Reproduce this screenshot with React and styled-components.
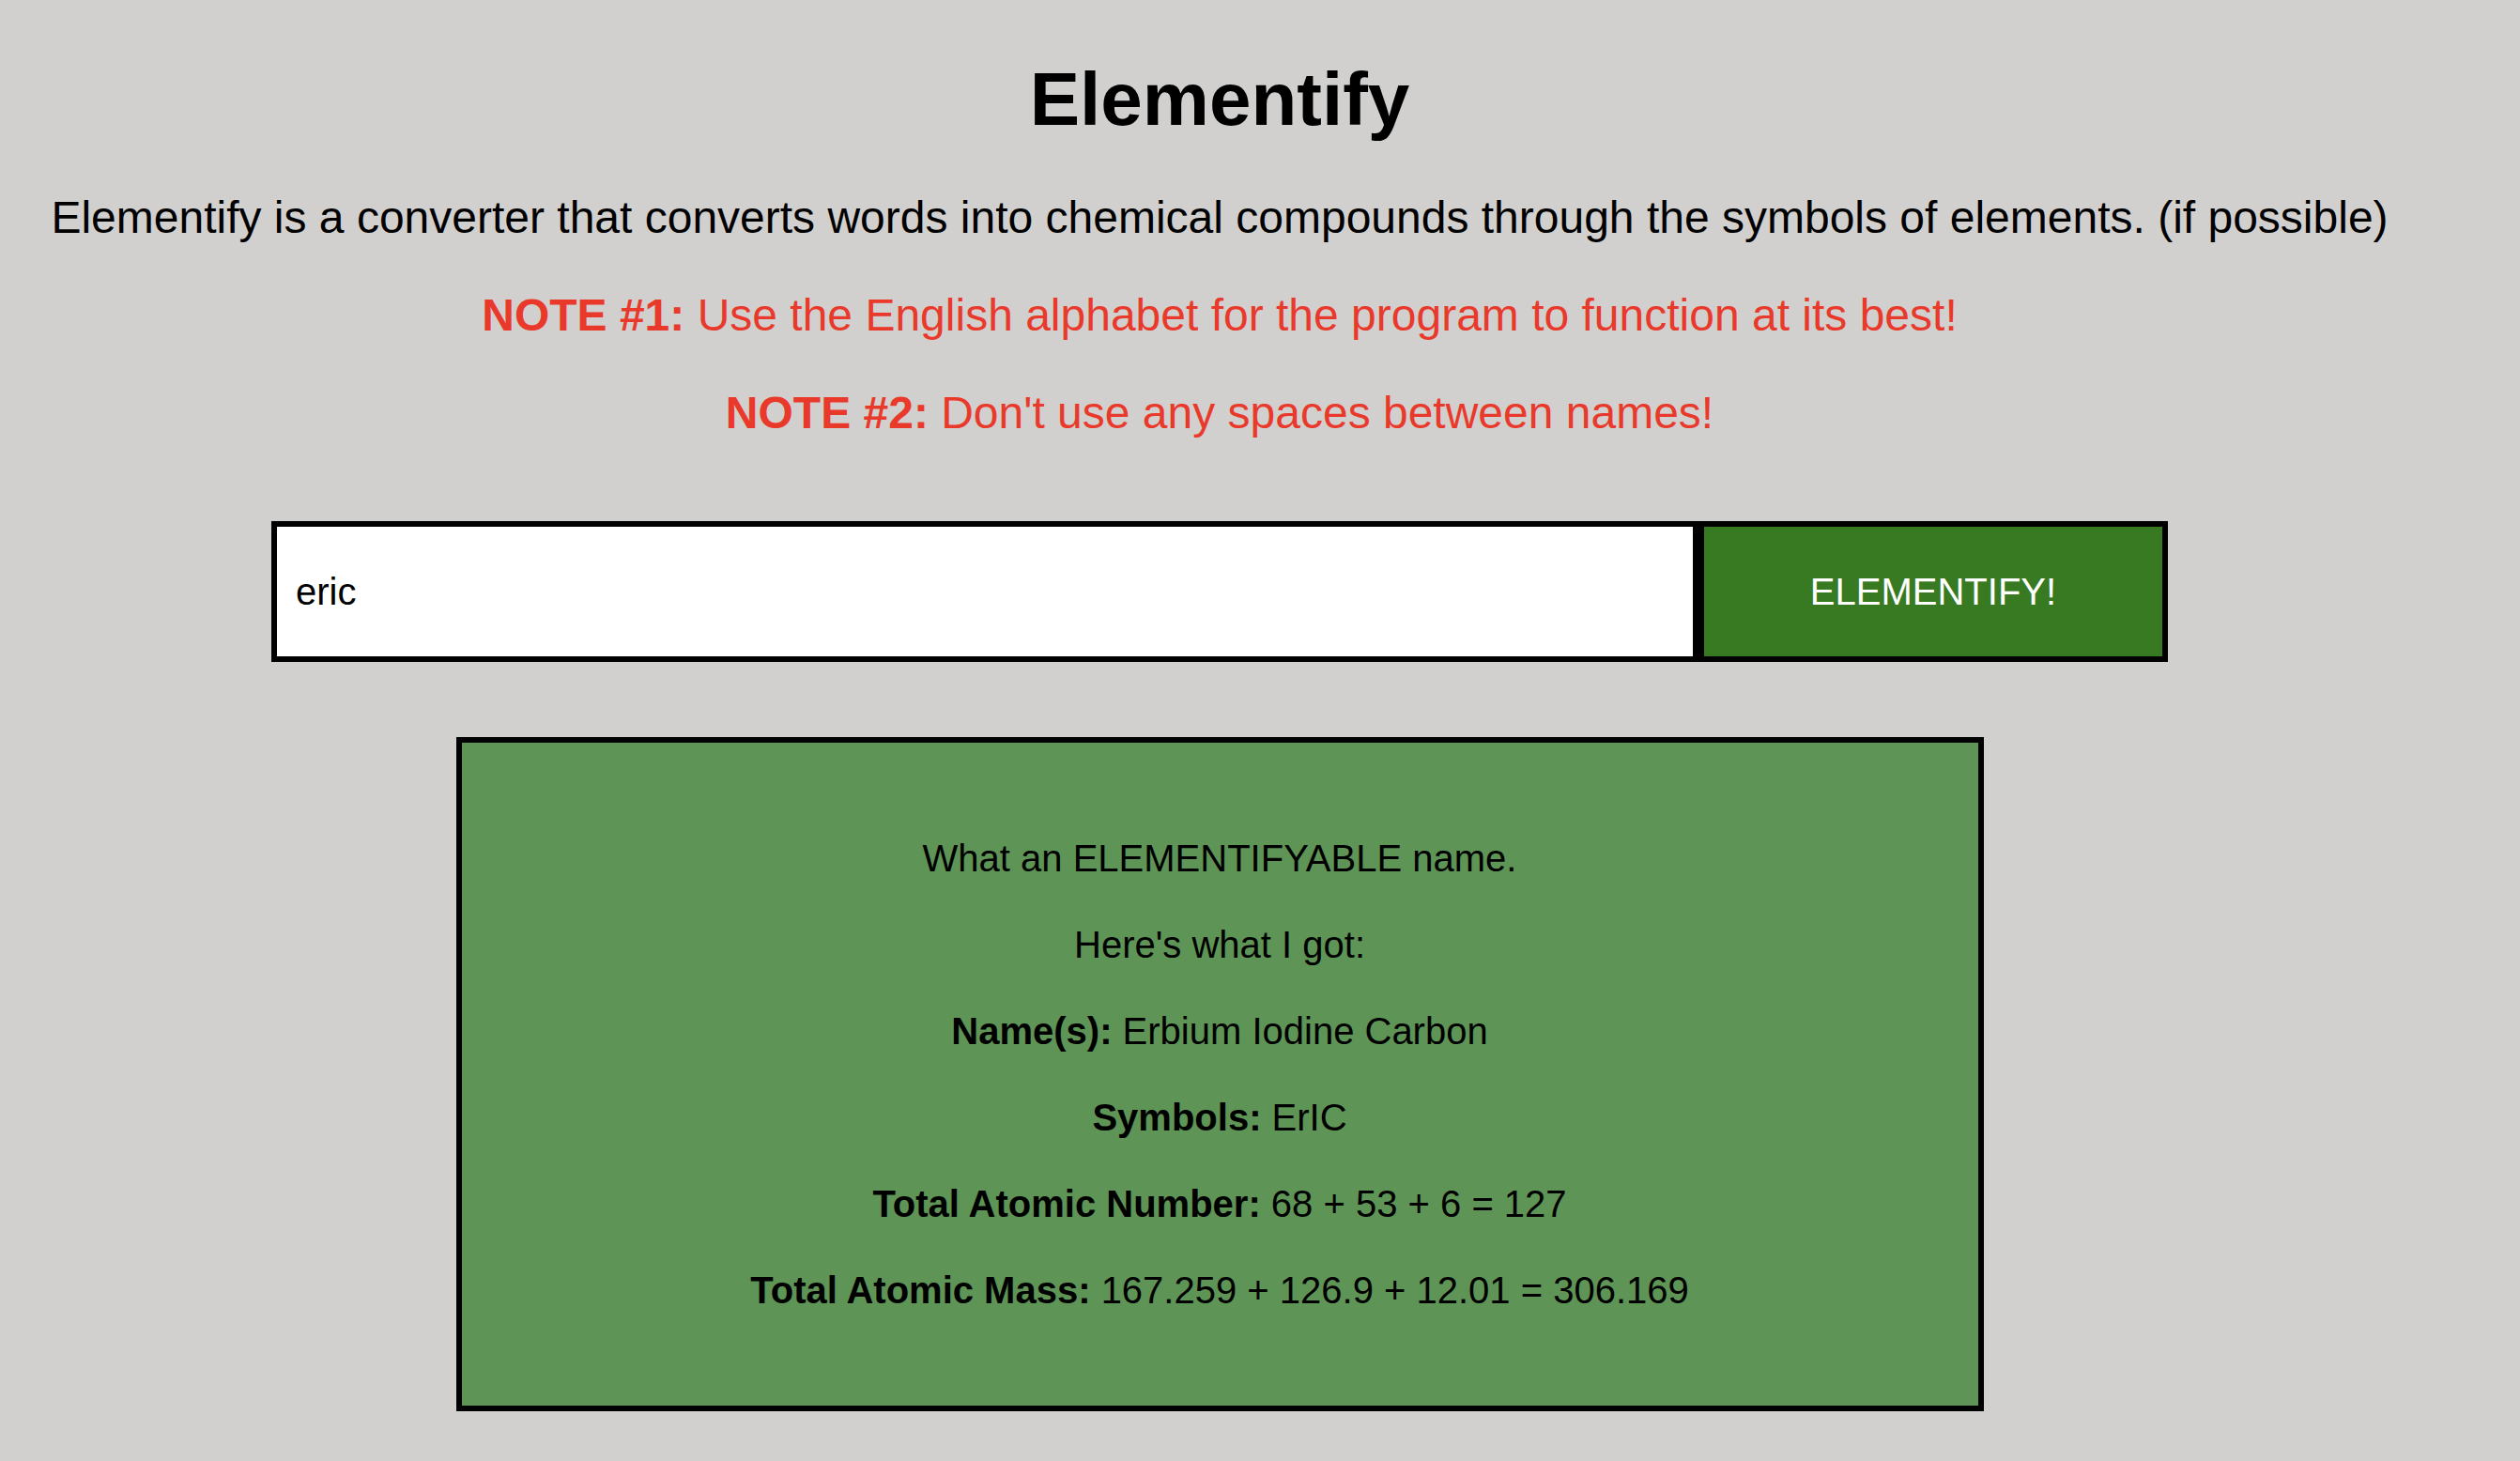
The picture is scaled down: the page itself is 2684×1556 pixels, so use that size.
import React, { useState } from "react";
import styled, { createGlobalStyle } from "styled-components";

const GlobalStyle = createGlobalStyle`
  body {
    margin: 0;
    background: #d1d0ce;
    font-family: "Liberation Sans", Arial, Helvetica, sans-serif;
    color: #000;
  }
`;

const Page = styled.div`
  width: 2598px;
  padding: 60px 0 40px;
  display: flex;
  flex-direction: column;
  align-items: center;
  text-align: center;
`;

const Title = styled.h1`
  margin: 0;
  font-size: 80px;
  line-height: 92px;
  font-weight: 700;
`;

const Intro = styled.p`
  margin: 52px 0 0;
  font-size: 48px;
  line-height: 56px;
`;

const Note = styled.p`
  margin: 48px 0 0;
  font-size: 48px;
  line-height: 56px;
  color: #e9392b;

  strong {
    font-weight: 700;
  }
`;

const Form = styled.form`
  display: flex;
  margin-top: 87px;
  height: 150px;
`;

const Input = styled.input`
  box-sizing: border-box;
  width: 1520px;
  height: 100%;
  border: 6px solid #000;
  padding: 0 20px;
  margin: 0;
  background: #fff;
  font-family: inherit;
  font-size: 40px;
  color: #000;
  outline: none;
`;

const Button = styled.button`
  box-sizing: border-box;
  width: 500px;
  height: 100%;
  border: 6px solid #000;
  margin: 0;
  background: #377a22;
  color: #fff;
  font-family: inherit;
  font-size: 40px;
  cursor: pointer;
`;

const Result = styled.div`
  box-sizing: border-box;
  margin-top: 80px;
  width: 1627px;
  border: 6px solid #000;
  background: #5e9456;
  padding: 100px 0;
  display: flex;
  flex-direction: column;
  gap: 46px;
`;

const Line = styled.p`
  margin: 0;
  font-size: 40px;
  line-height: 46px;

  b {
    font-weight: 700;
  }
`;

export default function App() {
  const [name, setName] = useState("eric");

  const rows = [
    { label: "Name(s):", value: "Erbium Iodine Carbon" },
    { label: "Symbols:", value: "ErIC" },
    { label: "Total Atomic Number:", value: "68 + 53 + 6 = 127" },
    { label: "Total Atomic Mass:", value: "167.259 + 126.9 + 12.01 = 306.169" },
  ];

  return (
    <>
      <GlobalStyle />
      <Page>
        <Title>Elementify</Title>
        <Intro>
          Elementify is a converter that converts words into chemical compounds through the symbols of elements. (if possible)
        </Intro>
        <Note>
          <strong>NOTE #1:</strong> Use the English alphabet for the program to function at its best!
        </Note>
        <Note>
          <strong>NOTE #2:</strong> Don't use any spaces between names!
        </Note>
        <Form onSubmit={e => e.preventDefault()}>
          <Input value={name} onChange={e => setName(e.target.value)} />
          <Button type="submit">ELEMENTIFY!</Button>
        </Form>
        <Result>
          <Line>What an ELEMENTIFYABLE name.</Line>
          <Line>Here's what I got:</Line>
          {rows.map(r => (
            <Line key={r.label}>
              <b>{r.label}</b> {r.value}
            </Line>
          ))}
        </Result>
      </Page>
    </>
  );
}
